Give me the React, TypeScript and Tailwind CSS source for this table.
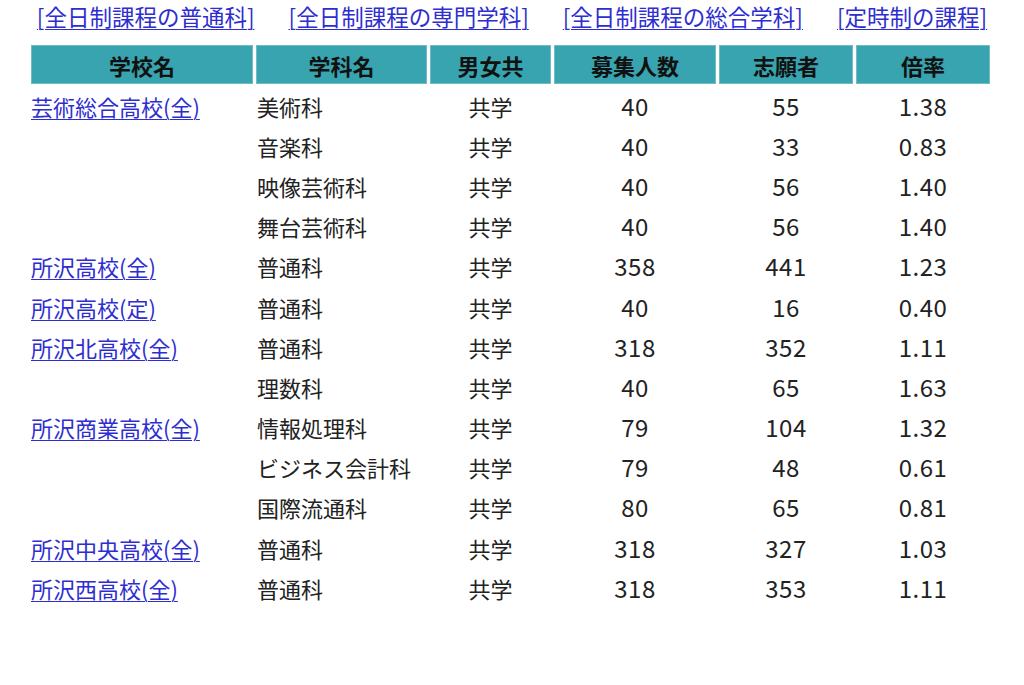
import React from "react";

type Row = { school?: string; dept: string; sex: string; cap: string; app: string; rate: string };

const rows: Row[] = [
  { school: "芸術総合高校(全)", dept: "美術科", sex: "共学", cap: "40", app: "55", rate: "1.38" },
  { dept: "音楽科", sex: "共学", cap: "40", app: "33", rate: "0.83" },
  { dept: "映像芸術科", sex: "共学", cap: "40", app: "56", rate: "1.40" },
  { dept: "舞台芸術科", sex: "共学", cap: "40", app: "56", rate: "1.40" },
  { school: "所沢高校(全)", dept: "普通科", sex: "共学", cap: "358", app: "441", rate: "1.23" },
  { school: "所沢高校(定)", dept: "普通科", sex: "共学", cap: "40", app: "16", rate: "0.40" },
  { school: "所沢北高校(全)", dept: "普通科", sex: "共学", cap: "318", app: "352", rate: "1.11" },
  { dept: "理数科", sex: "共学", cap: "40", app: "65", rate: "1.63" },
  { school: "所沢商業高校(全)", dept: "情報処理科", sex: "共学", cap: "79", app: "104", rate: "1.32" },
  { dept: "ビジネス会計科", sex: "共学", cap: "79", app: "48", rate: "0.61" },
  { dept: "国際流通科", sex: "共学", cap: "80", app: "65", rate: "0.81" },
  { school: "所沢中央高校(全)", dept: "普通科", sex: "共学", cap: "318", app: "327", rate: "1.03" },
  { school: "所沢西高校(全)", dept: "普通科", sex: "共学", cap: "318", app: "353", rate: "1.11" },
];

const links = ["[全日制課程の普通科]", "[全日制課程の専門学科]", "[全日制課程の総合学科]", "[定時制の課程]"];
const heads = ["学校名", "学科名", "男女共", "募集人数", "志願者", "倍率"];
const widths = ["w-[222px]", "w-[171px]", "w-[121px]", "w-[162px]", "w-[134px]", "w-[134px]"];

export default function App() {
  return (
    <div
      className="w-[1024px] h-[685px] bg-white text-[#222] text-[22px] leading-none"
      style={{ fontFamily: '"Noto Sans CJK JP", "Noto Sans", sans-serif' }}
    >
      <div className="flex justify-center gap-[34px] pt-[3px] h-[42px]">
        {links.map((l) => (
          <a key={l} href="#" className="text-[#2e2ed0] text-[22.5px] underline underline-offset-[3px] decoration-1 leading-[26px]">
            {l}
          </a>
        ))}
      </div>
      <table className="ml-[28px] border-separate border-spacing-[3px] table-fixed">
        <thead>
          <tr>
            {heads.map((h, i) => (
              <th
                key={h}
                className={`${widths[i]} h-[39px] p-0 bg-[#37a4af] border border-[#6fbcc4] font-bold text-[22px] text-[#111] text-center align-middle`}
              >
                {h}
              </th>
            ))}
          </tr>
        </thead>
        <tbody>
          {rows.map((r, idx) => (
            <tr key={idx}>
              <td className="h-[37.2px] p-0 align-middle text-left">
                {r.school && (
                  <a href="#" className="text-[#2e2ed0] underline underline-offset-[3px] decoration-1">
                    {r.school}
                  </a>
                )}
              </td>
              <td className="p-0 pl-[1px] align-middle text-left">{r.dept}</td>
              <td className="p-0 align-middle text-center">{r.sex}</td>
              <td className="p-0 align-middle text-center text-[24px] font-normal tracking-[0.5px]">{r.cap}</td>
              <td className="p-0 align-middle text-center text-[24px] font-normal tracking-[0.5px]">{r.app}</td>
              <td className="p-0 align-middle text-center text-[24px] font-normal tracking-[0.5px]">{r.rate}</td>
            </tr>
          ))}
        </tbody>
      </table>
    </div>
  );
}
